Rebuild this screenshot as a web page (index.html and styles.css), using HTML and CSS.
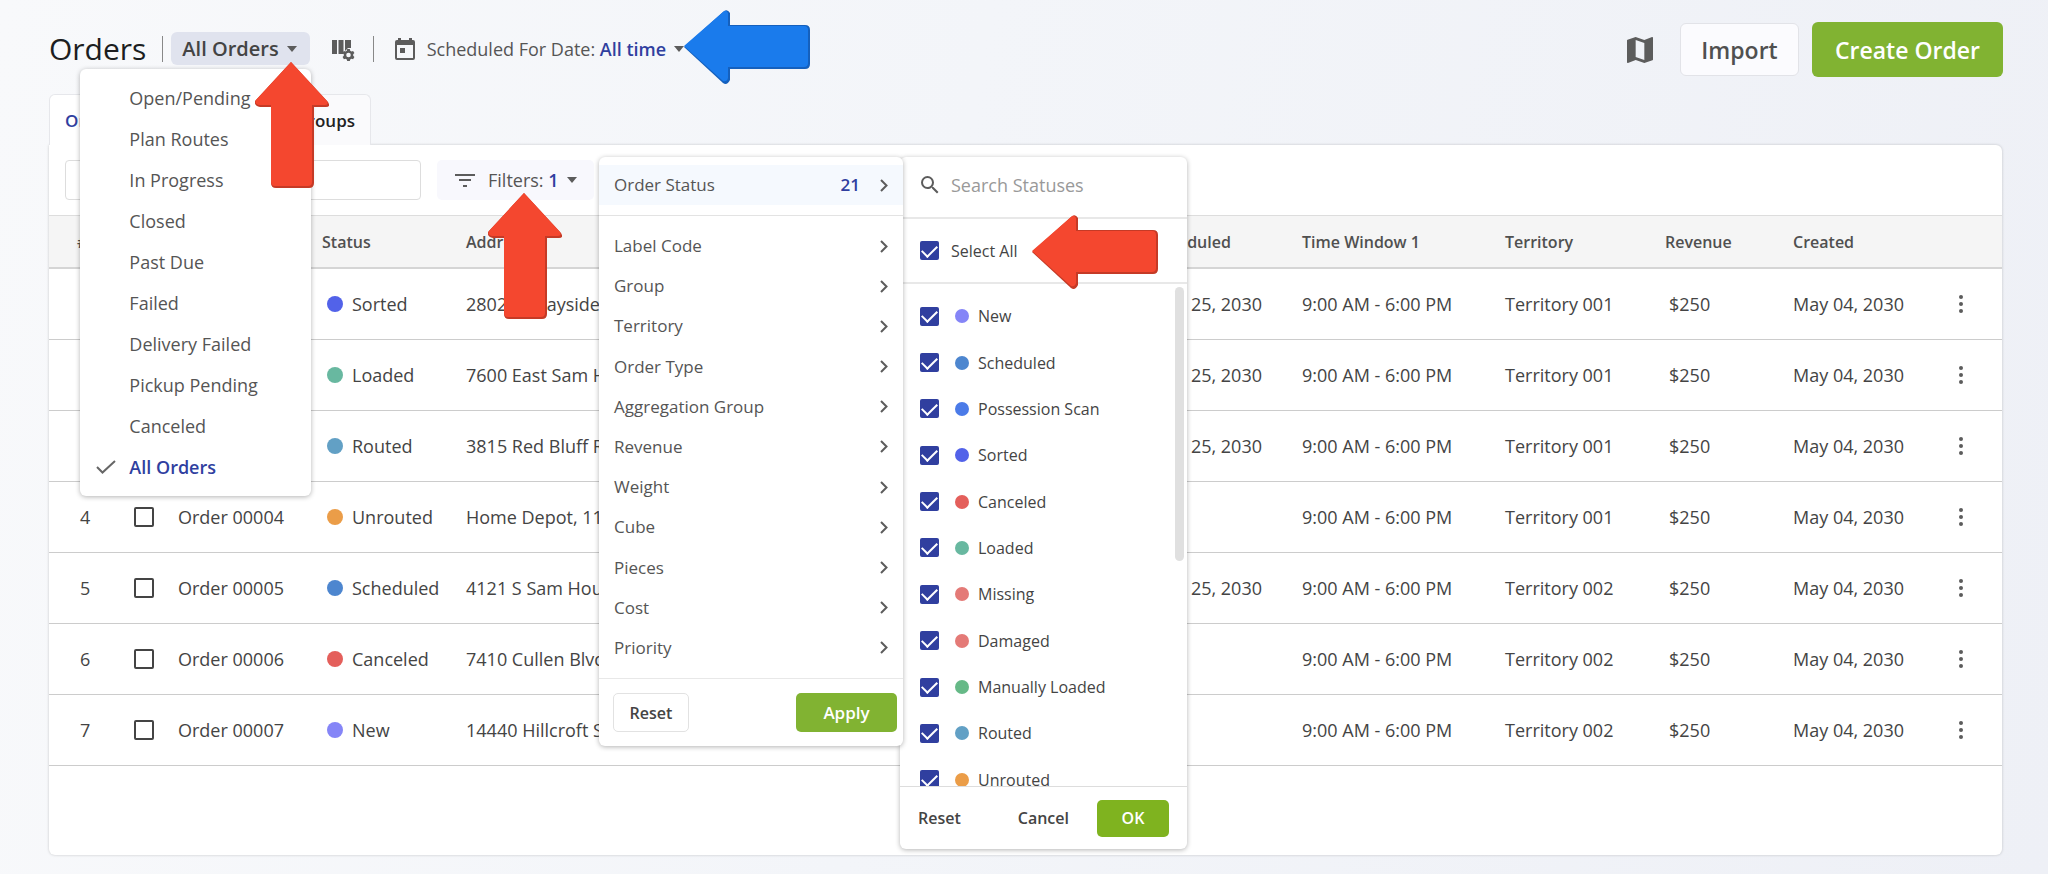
FILE: index.html
```html
<!DOCTYPE html>
<html lang="en">
<head>
    <meta charset="UTF-8">
    <meta name="viewport" content="width=device-width, initial-scale=1.0">
    <title>Orders</title>
    <link rel="stylesheet" href="styles.css">
</head>
<body>
    <!-- shared icons -->
    <svg class="sprite" aria-hidden="true">
        <symbol id="caret" viewBox="0 0 10 6"><path d="M0 0h10L5 6z"/></symbol>
        <symbol id="chevron" viewBox="0 0 8 13"><path d="M1 1l5.500 5.500L1 12" fill="none" stroke="currentColor" stroke-width="2"/></symbol>
        <symbol id="dots" viewBox="0 0 6 20"><circle cx="3" cy="3" r="2"/><circle cx="3" cy="10" r="2"/><circle cx="3" cy="17" r="2"/></symbol>
        <symbol id="search" viewBox="0 0 24 24"><path d="M15.500 14h-.79l-.28-.27A6.470 6.470 0 0 0 16 9.500 6.500 6.500 0 1 0 9.500 16c1.610 0 3.090-.59 4.230-1.570l.27.28v.79l5 4.990L20.490 19l-4.990-5zm-6 0C7.010 14 5 11.990 5 9.500S7.010 5 9.500 5 14 7.010 14 9.500 11.990 14 9.500 14z"/></symbol>
        <symbol id="arrow-up" viewBox="0 0 74 126">
            <path class="edge" d="M36 0L73 40q3 5-2 5H59V121q0 5-5 5H21q-5 0-5-5V45H5q-6-1-5-6z"/>
            <path d="M36 0L72 39q2 4-2 4H57V120q0 4-4 4H20q-4 0-4-4V43H4q-5-1-3-5z"/>
        </symbol>
        <symbol id="arrow-left" viewBox="0 0 126 74">
            <path class="edge" d="M0 37L39 2q4-4 7 1V15H121q5 0 5 5V54q0 5-5 5H46V70q-3 6-7 3z"/>
            <path d="M0 36L39 2q3-3 5 1V16H120q4 0 4 4V53q0 4-4 4H44V68q-1 4-5 3z"/>
        </symbol>
    </svg>

    <header class="header">
        <div class="title-bar">
            <h1>Orders</h1>
            <span class="divider"></span>
            <div class="view">
                <button type="button" class="view-button">All Orders <svg class="caret"><use href="#caret"/></svg></button>
                <ul class="menu view-menu">
                    <li>Open/Pending</li>
                    <li>Plan Routes</li>
                    <li>In Progress</li>
                    <li>Closed</li>
                    <li>Past Due</li>
                    <li>Failed</li>
                    <li>Delivery Failed</li>
                    <li>Pickup Pending</li>
                    <li>Canceled</li>
                    <li class="selected"><svg viewBox="0 0 20 14"><path d="M1 7l5.500 5.500L19 1" fill="none" stroke="#666" stroke-width="2"/></svg>All Orders</li>
                </ul>
            </div>
            <button type="button" class="icon-button columns-button" aria-label="Columns">
                <svg width="24" height="22" viewBox="0 0 24 22"><path d="M1 1h5v14H1zM7.500 1h5v14h-5zM14 1h6v8h-3l-3 3z"/><path fill-rule="evenodd" d="M16.200 10h2.600l.4 1.700 1.300.7 1.600-.5 1.300 2.200-1.200 1.200v1.500l1.200 1.200-1.300 2.200-1.600-.5-1.300.7-.4 1.600h-2.600l-.4-1.600-1.300-.7-1.600.5-1.300-2.200 1.200-1.200v-1.500l-1.200-1.200 1.300-2.200 1.600.5 1.300-.7zM17.500 13.700a2.300 2.300 0 1 0 0 4.600 2.300 2.300 0 1 0 0-4.600z"/></svg>
            </button>
            <span class="divider"></span>
            <button type="button" class="date-button">
                <svg class="calendar" width="20" height="22" viewBox="0 0 20 22"><path fill-rule="evenodd" d="M3 0h3v2h8V0h3v2h1q2 0 2 2v16q0 2-2 2H2q-2 0-2-2V4q0-2 2-2h1zM2 7v13h16V7z"/><path d="M5 10h5v5H5z"/></svg>
                <span>Scheduled For Date: <b>All time</b></span>
                <svg class="caret"><use href="#caret"/></svg>
            </button>
        </div>
        <div class="actions">
            <button type="button" class="icon-button" aria-label="Map">
                <svg width="26" height="26" viewBox="0 0 18 18"><path d="M17.500 0l-.16.030L12 2.100 6 0 .36 1.900C.15 1.970 0 2.150 0 2.380V17.500c0 .28.22.5.5.5l.16-.03L6 15.900l6 2.100 5.640-1.900c.21-.07.36-.25.36-.48V.5c0-.28-.22-.5-.5-.5zM12 16l-6-2.110V2l6 2.110V16z"/></svg>
            </button>
            <button type="button" class="button import">Import</button>
            <button type="button" class="button create">Create Order</button>
        </div>
    </header>

    <main>
        <nav class="tabs">
            <a href="#" class="tab active">Orders</a>
            <a href="#" class="tab">Aggregation Groups</a>
        </nav>
        <section class="panel">
            <div class="toolbar">
                <label class="search"><svg><use href="#search"/></svg><input type="text" aria-label="Search orders"></label>
                <div class="filters">
                    <button type="button" class="filters-button">
                        <svg width="20" height="13" viewBox="0 0 20 13"><path d="M0 0h20v2H0zM4 5h12v2H4zM8 11h4v2H8z"/></svg>
                        <span>Filters: <b>1</b></span>
                        <svg class="caret"><use href="#caret"/></svg>
                    </button>
                    <div class="filter-menus">
                        <div class="menu filter-menu">
                            <div class="filter-top"><button type="button" class="filter-item current">Order Status <b>21</b><svg><use href="#chevron"/></svg></button></div>
                            <div class="filter-list">
                                <button type="button" class="filter-item">Label Code<svg><use href="#chevron"/></svg></button>
                                <button type="button" class="filter-item">Group<svg><use href="#chevron"/></svg></button>
                                <button type="button" class="filter-item">Territory<svg><use href="#chevron"/></svg></button>
                                <button type="button" class="filter-item">Order Type<svg><use href="#chevron"/></svg></button>
                                <button type="button" class="filter-item">Aggregation Group<svg><use href="#chevron"/></svg></button>
                                <button type="button" class="filter-item">Revenue<svg><use href="#chevron"/></svg></button>
                                <button type="button" class="filter-item">Weight<svg><use href="#chevron"/></svg></button>
                                <button type="button" class="filter-item">Cube<svg><use href="#chevron"/></svg></button>
                                <button type="button" class="filter-item">Pieces<svg><use href="#chevron"/></svg></button>
                                <button type="button" class="filter-item">Cost<svg><use href="#chevron"/></svg></button>
                                <button type="button" class="filter-item">Priority<svg><use href="#chevron"/></svg></button>
                            </div>
                            <div class="filter-footer">
                                <button type="button" class="small-button reset">Reset</button>
                                <button type="button" class="small-button apply">Apply</button>
                            </div>
                        </div>
                        <div class="menu status-menu">
                            <label class="status-search"><svg><use href="#search"/></svg><input type="text" placeholder="Search Statuses" aria-label="Search Statuses"></label>
                            <label class="select-all"><input type="checkbox" checked>Select All</label>
                            <div class="status-scroll">
                                <div class="status-list">
                                    <label><input type="checkbox" checked><i class="dot new"></i>New</label>
                                    <label><input type="checkbox" checked><i class="dot scheduled"></i>Scheduled</label>
                                    <label><input type="checkbox" checked><i class="dot possession"></i>Possession Scan</label>
                                    <label><input type="checkbox" checked><i class="dot sorted"></i>Sorted</label>
                                    <label><input type="checkbox" checked><i class="dot canceled"></i>Canceled</label>
                                    <label><input type="checkbox" checked><i class="dot loaded"></i>Loaded</label>
                                    <label><input type="checkbox" checked><i class="dot missing"></i>Missing</label>
                                    <label><input type="checkbox" checked><i class="dot missing"></i>Damaged</label>
                                    <label><input type="checkbox" checked><i class="dot manual"></i>Manually Loaded</label>
                                    <label><input type="checkbox" checked><i class="dot routed"></i>Routed</label>
                                    <label><input type="checkbox" checked><i class="dot unrouted"></i>Unrouted</label>
                                </div>
                                <div class="thumb"></div>
                            </div>
                            <div class="status-footer">
                                <button type="button" class="text-button">Reset</button>
                                <button type="button" class="text-button cancel">Cancel</button>
                                <button type="button" class="ok">OK</button>
                            </div>
                        </div>
                    </div>
                </div>
            </div>

            <table>
                <colgroup>
                    <col class="c-num"><col class="c-check"><col class="c-order"><col class="c-status"><col>
                    <col class="c-date"><col class="c-time"><col class="c-territory"><col class="c-revenue"><col class="c-created"><col class="c-more">
                </colgroup>
                <thead>
                    <tr><th class="num">#</th><th></th><th>Order</th><th>Status</th><th>Address</th><th>Scheduled</th><th>Time Window 1</th><th>Territory</th><th>Revenue</th><th>Created</th><th></th></tr>
                </thead>
                <tbody>
                    <tr><td class="num">1</td><td><input type="checkbox" aria-label="Order 00001"></td><td>Order 00001</td><td><span class="status"><i class="dot sorted"></i>Sorted</span></td><td>2802 N Wayside Dr</td><td>May 25, 2030</td><td>9:00 AM - 6:00 PM</td><td>Territory 001</td><td class="money">$250</td><td>May 04, 2030</td><td><button type="button" class="more" aria-label="More"><svg><use href="#dots"/></svg></button></td></tr>
                    <tr><td class="num">2</td><td><input type="checkbox" aria-label="Order 00002"></td><td>Order 00002</td><td><span class="status"><i class="dot loaded"></i>Loaded</span></td><td>7600 East Sam Houston</td><td>May 25, 2030</td><td>9:00 AM - 6:00 PM</td><td>Territory 001</td><td class="money">$250</td><td>May 04, 2030</td><td><button type="button" class="more" aria-label="More"><svg><use href="#dots"/></svg></button></td></tr>
                    <tr><td class="num">3</td><td><input type="checkbox" aria-label="Order 00003"></td><td>Order 00003</td><td><span class="status"><i class="dot routed"></i>Routed</span></td><td>3815 Red Bluff Rd</td><td>May 25, 2030</td><td>9:00 AM - 6:00 PM</td><td>Territory 001</td><td class="money">$250</td><td>May 04, 2030</td><td><button type="button" class="more" aria-label="More"><svg><use href="#dots"/></svg></button></td></tr>
                    <tr><td class="num">4</td><td><input type="checkbox" aria-label="Order 00004"></td><td>Order 00004</td><td><span class="status"><i class="dot unrouted"></i>Unrouted</span></td><td>Home Depot, 11500</td><td></td><td>9:00 AM - 6:00 PM</td><td>Territory 001</td><td class="money">$250</td><td>May 04, 2030</td><td><button type="button" class="more" aria-label="More"><svg><use href="#dots"/></svg></button></td></tr>
                    <tr><td class="num">5</td><td><input type="checkbox" aria-label="Order 00005"></td><td>Order 00005</td><td><span class="status"><i class="dot scheduled"></i>Scheduled</span></td><td>4121 S Sam Houston</td><td>May 25, 2030</td><td>9:00 AM - 6:00 PM</td><td>Territory 002</td><td class="money">$250</td><td>May 04, 2030</td><td><button type="button" class="more" aria-label="More"><svg><use href="#dots"/></svg></button></td></tr>
                    <tr><td class="num">6</td><td><input type="checkbox" aria-label="Order 00006"></td><td>Order 00006</td><td><span class="status"><i class="dot canceled"></i>Canceled</span></td><td>7410 Cullen Blvd</td><td></td><td>9:00 AM - 6:00 PM</td><td>Territory 002</td><td class="money">$250</td><td>May 04, 2030</td><td><button type="button" class="more" aria-label="More"><svg><use href="#dots"/></svg></button></td></tr>
                    <tr><td class="num">7</td><td><input type="checkbox" aria-label="Order 00007"></td><td>Order 00007</td><td><span class="status"><i class="dot new"></i>New</span></td><td>14440 Hillcroft St</td><td></td><td>9:00 AM - 6:00 PM</td><td>Territory 002</td><td class="money">$250</td><td>May 04, 2030</td><td><button type="button" class="more" aria-label="More"><svg><use href="#dots"/></svg></button></td></tr>
                </tbody>
            </table>
        </section>
    </main>

    <!-- pointers -->
    <svg class="arrow up a1"><use href="#arrow-up"/></svg>
    <svg class="arrow up a2"><use href="#arrow-up"/></svg>
    <svg class="arrow left a3"><use href="#arrow-left"/></svg>
    <svg class="arrow left blue a4"><use href="#arrow-left"/></svg>
</body>
</html>
```

FILE: styles.css
```css
* {
    box-sizing: border-box;
}
body {
    position: relative;
    margin: 0;
    padding: 22px 45px 19px 49px;
    min-height: 100vh;
    font-family: "Open Sans", "Noto Sans", sans-serif;
    font-size: 18px;
    line-height: 24px;
    color: #444;
    background: linear-gradient(100deg, #f8f9fb 0%, #f3f5f9 45%, #eef0f6 100%);
    overflow-x: hidden;
}
button, input {
    font: inherit;
    color: inherit;
    margin: 0;
}
button {
    padding: 0;
    border: none;
    background: none;
    cursor: pointer;
}
svg {
    display: block;
    flex: none;
    fill: #5c5c5c;
}
b {
    font-weight: 600;
    color: #303f9f;
}
ul {
    list-style: none;
    margin: 0;
}
.sprite {
    position: absolute;
    width: 0;
    height: 0;
}
.caret {
    width: 10px;
    height: 6px;
}

/* header */
.header {
    display: flex;
    align-items: center;
    height: 55px;
    color: #555;
}
.title-bar {
    display: flex;
    align-items: center;
    padding-bottom: 2px;
}
h1 {
    margin: 0;
    font-size: 30px;
    line-height: 40px;
    font-weight: 400;
    color: #1c1e21;
}
.divider {
    width: 1px;
    height: 26px;
    margin: 0 8px 0 16px;
    background: #888;
}
.view {
    position: relative;
}
.view-button {
    display: flex;
    align-items: center;
    gap: 8px;
    height: 33px;
    padding: 0 13px 0 11px;
    border-radius: 6px;
    background: #e0e3ee;
    font-size: 20px;
    font-weight: 600;
    color: #444;
}
.columns-button {
    margin: 2px 2px 0 21px;
}
.date-button {
    display: flex;
    align-items: center;
    gap: 8px;
    margin-left: 13px;
}
.calendar {
    margin-right: 4px;
}
.actions {
    display: flex;
    align-items: center;
    margin-left: auto;
}
.button {
    font-size: 23px;
    font-weight: 600;
    border-radius: 6px;
}
.import {
    height: 53px;
    width: 119px;
    margin: 0 13px 0 27px;
    border: 1px solid #e2e3e8;
    background: #fbfbfe;
    color: #505050;
}
.create {
    height: 55px;
    width: 191px;
    background: #81b332;
    color: #fff;
}

/* drop-down menus */
.menu {
    background: #fff;
    border-radius: 6px;
    box-shadow: 0 1px 5px rgba(0, 0, 0, .3);
    color: #555;
}
.view-menu {
    position: absolute;
    top: 37px;
    left: -91px;
    z-index: 5;
    width: 231px;
    padding: 8px 0 9px;
}
.view-menu li {
    display: flex;
    align-items: center;
    height: 41px;
    padding-left: 49px;
}
.view-menu .selected {
    padding-left: 16px;
    font-weight: 600;
    color: #303f9f;
}
.selected svg {
    width: 20px;
    height: 14px;
    margin-right: 13px;
}

/* tabs */
.tabs {
    display: flex;
    align-items: flex-end;
    width: 322px;
    margin-top: 17px;
}
.tab {
    flex: 1;
    padding: 14px 15px 12px;
    border: 1px solid #e6e7eb;
    border-bottom: none;
    border-radius: 6px 6px 0 0;
    background: #fafafc;
    font-size: 17px;
    font-weight: 600;
    color: #222;
    text-align: right;
    text-decoration: none;
}
.tab.active {
    flex: none;
    background: #fff;
    color: #303f9f;
}

/* panel */
.panel {
    min-height: 710px;
    margin-right: 1px;
    border-radius: 0 6px 6px 6px;
    background: #fff;
    box-shadow: 0 0 3px rgba(0, 0, 0, .2);
}
.toolbar {
    display: flex;
    gap: 16px;
    padding: 15px 16px;
}
.search {
    display: flex;
    align-items: center;
    width: 356px;
    height: 40px;
    padding: 0 10px;
    border: 1px solid #ddd;
    border-radius: 4px;
}
.search svg, .status-search svg {
    width: 24px;
    height: 24px;
}
.search svg {
    margin-left: 2px;
}
.search input, .status-search input {
    flex: 1;
    min-width: 0;
    padding: 0;
    border: none;
    outline: none;
    background: none;
}
.filters {
    position: relative;
}
.filters-button {
    display: flex;
    align-items: center;
    height: 40px;
    width: 157px;
    padding-left: 18px;
    border-radius: 5px;
    background: #f8f8fd;
    color: #555;
}
.filters-button span {
    margin: 0 8px 0 13px;
}
.filter-menus {
    position: absolute;
    top: -3px;
    left: 162px;
    z-index: 4;
    display: flex;
    align-items: flex-start;
}
.filter-menu {
    position: relative;
    z-index: 1;
    width: 304px;
    font-size: 17px;
}
.filter-top {
    padding: 8px 0 10px;
    border-bottom: 1px solid #e3e3e3;
}
.filter-list {
    display: grid;
    grid-auto-rows: 1fr;
    height: 462px;
    padding: 10px 0;
}
.filter-item {
    display: flex;
    align-items: center;
    width: 100%;
    padding: 0 15px;
}
.filter-item.current {
    height: 40px;
    background: #f5f9fe;
}
.filter-item svg {
    width: 8px;
    height: 13px;
    margin-left: auto;
    color: #5c5c5c;
}
.filter-item b {
    margin-left: auto;
}
.filter-item b + svg {
    margin-left: 20px;
}
.filter-footer {
    display: flex;
    align-items: center;
    justify-content: space-between;
    height: 68px;
    padding: 0 6px 0 14px;
    border-top: 1px solid #e8e8e8;
}
.small-button {
    height: 39px;
    border-radius: 5px;
    font-weight: 600;
}
.reset {
    width: 76px;
    border: 1px solid #e2e2e2;
    font-size: 16px;
    color: #444;
}
.apply {
    width: 101px;
    background: #81b332;
    color: #fff;
}
.status-menu {
    width: 287px;
    margin-left: -3px;
    font-size: 16px;
    color: #444;
}
.status-search {
    display: flex;
    align-items: center;
    gap: 9px;
    height: 62px;
    padding: 0 18px;
    padding-bottom: 4px;
    font-size: 18px;
    border-bottom: 2px solid #e8e8e8;
}
.status-search input::placeholder {
    color: #999;
    opacity: 1;
}
.select-all, .status-list label {
    display: flex;
    align-items: center;
    padding-left: 20px;
}
.select-all {
    gap: 12px;
    height: 65px;
    border-bottom: 2px solid #e8e8e8;
}
.status-scroll {
    position: relative;
    height: 502px;
    padding-top: 9px;
    overflow: hidden;
}
.status-list {
    display: grid;
    grid-auto-rows: 1fr;
    height: 510px;
}
.status-list .dot {
    width: 14px;
    height: 14px;
    margin: 0 9px 0 16px;
}
.thumb {
    position: absolute;
    top: 3px;
    right: 3px;
    width: 9px;
    height: 274px;
    border-radius: 5px;
    background: #e0e0e0;
}
.status-footer {
    display: flex;
    align-items: center;
    height: 63px;
    padding: 0 18px;
    border-top: 1px solid #ddd;
    font-size: 16px;
}
.text-button, .ok {
    font-weight: 600;
}
.cancel {
    margin: 0 28px 0 auto;
}
.ok {
    width: 72px;
    height: 37px;
    border-radius: 5px;
    background: #7fb31f;
    color: #fff;
}

/* checkboxes and dots */
input[type="checkbox"] {
    appearance: none;
    display: grid;
    place-items: center;
    flex: none;
    width: 20px;
    height: 20px;
    border: 2px solid #444;
    border-radius: 2px;
}
input[type="checkbox"]:checked {
    width: 19px;
    height: 19px;
    border: none;
    background: #303f9f;
}
input[type="checkbox"]:checked::after {
    content: "";
    width: 13px;
    height: 7px;
    margin-top: -3px;
    border: solid #fff;
    border-width: 0 0 2px 2px;
    transform: rotate(-45deg);
}
.dot {
    flex: none;
    width: 16px;
    height: 16px;
    border-radius: 50%;
}
.new { background: #8585f7; }
.scheduled { background: #4d86cf; }
.possession { background: #4b7be8; }
.sorted { background: #5262e9; }
.canceled { background: #e45f5b; }
.loaded { background: #68b8a0; }
.missing { background: #e47a77; }
.manual { background: #66b987; }
.routed { background: #62a0c5; }
.unrouted { background: #eb9d48; }

/* table */
table {
    width: 100%;
    table-layout: fixed;
    border-collapse: separate;
    border-spacing: 0;
}
.c-num { width: 85px; }
.c-check { width: 44px; }
.c-order, .c-status { width: 144px; }
.c-date { width: 151px; }
.c-time { width: 203px; }
.c-territory { width: 160px; }
.c-revenue { width: 128px; }
.c-created { width: 152px; }
.c-more { width: 57px; }
th {
    height: 54px;
    padding: 0;
    border-top: 1px solid #ddd;
    border-bottom: 2px solid #d5d5d5;
    background: #f5f5f5;
    font-size: 16px;
    font-weight: 600;
    text-align: left;
    color: #505050;
}
td {
    height: 71px;
    padding: 0;
    border-bottom: 1px solid #ccc;
    white-space: nowrap;
}
.num {
    padding-left: 31px;
}
th.num {
    padding-left: 28px;
}
.money {
    padding-left: 4px;
}
.status {
    display: flex;
    align-items: center;
    gap: 9px;
    padding-left: 5px;
}
.more {
    display: grid;
    place-items: center;
    width: 32px;
    height: 32px;
}
.more svg {
    width: 6px;
    height: 20px;
}

/* pointers */
.arrow {
    --edge: #c53a26;
    position: absolute;
    z-index: 10;
    fill: #f4472f;
    pointer-events: none;
}
.arrow.blue {
    --edge: #1560bd;
    fill: #1a7bec;
}
.edge {
    fill: var(--edge);
}
.up {
    width: 74px;
    height: 126px;
}
.left {
    width: 126px;
    height: 74px;
}
.a1 { left: 255px; top: 62px; }
.a2 { left: 488px; top: 193px; }
.a3 { left: 1032px; top: 215px; }
.a4 { left: 684px; top: 10px; }
```
